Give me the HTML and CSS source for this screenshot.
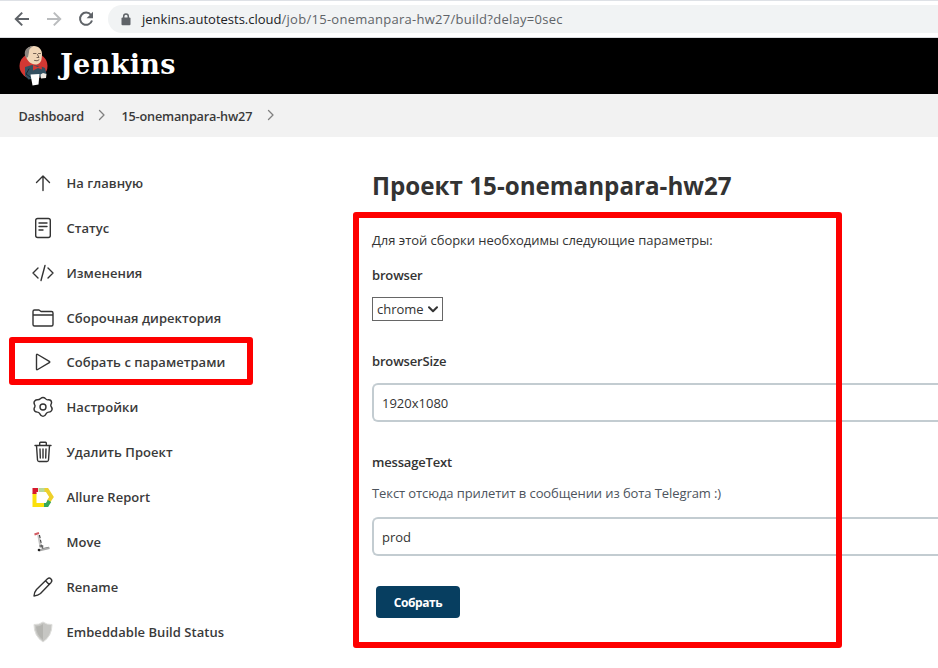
FILE: index.html
```html
<!DOCTYPE html>
<html lang="ru">
<head>
<meta charset="utf-8">
<title>Проект 15-onemanpara-hw27</title>
<link rel="stylesheet" href="styles.css">
</head>
<body>
<div class="toolbar">
  <svg class="nav" viewBox="0 0 20 20"><path d="M17 10H4M10.2 3.6 3.8 10l6.4 6.4"/></svg>
  <svg class="nav nav-off" viewBox="0 0 20 20"><path d="M3 10h13M9.8 3.6l6.4 6.4-6.4 6.4"/></svg>
  <svg class="nav" viewBox="0 0 20 20"><path d="M15 6A6.1 6.1 0 1 0 16 11.5"/><path class="solid" d="M17 2.8v6.4h-6.4z"/></svg>
  <div class="address">
    <svg class="lock" viewBox="0 0 10 13"><rect x="0.500" y="4.500" width="9" height="7.700" rx="1"/><path d="M2.700 5V3.300a2.300 2.300 0 0 1 4.600 0V5"/></svg>
    <span class="host">jenkins.autotests.cloud</span><span class="path">/job/15-onemanpara-hw27/build?delay=0sec</span>
  </div>
</div>
<header class="header">
  <svg class="butler" viewBox="0 0 30 41">
    <ellipse cx="14.500" cy="21" rx="14" ry="13" fill="#d33833"/>
    <path d="M6 22l7-2 8 1 5 2 1.500 6-4 3-14 2.500-3.500-4z" fill="#335061"/>
    <path d="M6.500 10C6 4 10 1 15 1s8.500 4 8 9-.5 7-4 9C14 21 8 17 6.500 10z" fill="#f0d6b7"/>
    <path d="M7 13C3.500 6 8 1 14 1.200 10.500 3 10 5 10 7l-1 5z" fill="#8d8680"/>
    <path d="M14.500 8.500H17m2.500 0h2M18.500 9.500l1.500 3h-2M15.500 15.500q3 1 4.500-.5" fill="none" stroke="#54443b" stroke-width=".8"/>
    <path d="M14 20l4.500 2 4-2 .5 4.500-4-1.500-5 2.500z" fill="#d33833"/>
    <path d="M11.500 29.500l9-.5-1 10.500-6 1z" fill="#fff"/>
    <path d="M21.500 29.500l2.500-1.500 3.500 1-.5 4-5 .5z" fill="#eee9e2"/>
    <path d="M10 24l-3 5 4 3" fill="none" stroke="#16272f"/>
  </svg>
  <span class="wordmark">Jenkins</span>
</header>
<nav class="crumbs">
  <span>Dashboard</span>
  <svg class="chev" viewBox="0 0 8 12"><path d="M1.5 1.500 6 6l-4.500 4.500"/></svg>
  <span>15-onemanpara-hw27</span>
  <svg class="chev" viewBox="0 0 8 12"><path d="M1.5 1.500 6 6l-4.500 4.500"/></svg>
</nav>
<div class="page">
  <aside class="tasks">
    <div class="task"><svg viewBox="0 0 24 24"><path d="M12 19.500V5M5.500 11.500 12 5l6.500 6.500"/></svg><span>На главную</span></div>
    <div class="task"><svg viewBox="0 0 24 24"><rect x="4.700" y="2.500" width="14.600" height="19" rx="2"/><path d="M8 7h8M8 10.500h8M8 14h4"/></svg><span>Статус</span></div>
    <div class="task"><svg viewBox="0 0 24 24"><path d="M7 7l-5 5 5 5M17 7l5 5-5 5M14 4.500l-4 15"/></svg><span>Изменения</span></div>
    <div class="task"><svg viewBox="0 0 24 24"><path d="M2 18.500V5.500Q2 4 3.500 4H8l2 1.500h10.500Q22 5.500 22 7v11.500Q22 20 20.500 20h-17Q2 20 2 18.500zM2 9h20"/></svg><span>Сборочная директория</span></div>
    <div class="task marked"><svg viewBox="0 0 24 24"><path d="M5.500 5v14q0 1.200 1.200.500l11.600-6.800q.900-.700 0-1.400L6.700 4.500Q5.500 3.800 5.500 5z"/></svg><span>Собрать с параметрами</span></div>
    <div class="task"><svg viewBox="0 0 24 24"><circle cx="12" cy="12" r="3"/><path d="M9.600 3.500Q12 1.500 14.400 3.500q1 1.600 2.800 1.300 3-.2 3.400 2.600-.1 1.200-.7 2.200-.5 1.400.5 2.400 1.600 2.200-.2 4.100-.9 1-2.600 1-1.500 0-2.200 1.300-1.500 3-3.400 3-2 0-3.300-2.800-.8-1.500-2.400-1.500-3.200 0-3.300-3 .1-1.100.8-2.100.6-1-.2-2.300-1.300-2.300.3-3.900.9-1 2.400-1 2 .1 3.300-1.300z"/></svg><span>Настройки</span></div>
    <div class="task"><svg viewBox="0 0 24 24"><path d="M4 5.500h16M5.500 5.500l1 14.500q.2 1.500 1.500 1.500h8q1.300 0 1.500-1.500l1-14.500M8.700 5.500V3q0-.8.8-.8h5q.8 0 .8.800v2.500M9 9l.3 9M12 9v9M15 9l-.3 9"/></svg><span>Удалить Проект</span></div>
    <div class="task"><svg viewBox="0 0 24 24" class="art"><path d="M3.500 8v12h10" stroke="#fbe00c"/><path d="M8 5h8l4.500 7-3 4.500" stroke="#eed02a"/><path d="M7.500 5h6" stroke="#b7d99b"/><path d="M13 20h3l2.500-4" stroke="#35a85a"/><path d="M3.500 9V5H7" stroke="#d6192d"/></svg><span>Allure Report</span></div>
    <div class="task"><svg viewBox="0 0 24 24" class="art"><path d="M7.500 5l2.500 13" stroke="#c4c4c4" stroke-width="2.500"/><path d="M8.500 5l2.500 12" stroke="#303030" stroke-width="1" stroke-dasharray="3 2"/><path d="M3.500 4.500L8 3" stroke="#d35b62" stroke-width="2"/><path d="M8.500 16h3v3L18 17.500" stroke="#666" stroke-width="1.500"/><path d="M8 20.500L18.500 18" stroke="#aaa" stroke-width="2"/><circle cx="8" cy="20" r="1.300" fill="#222" stroke="none"/></svg><span>Move</span></div>
    <div class="task"><svg viewBox="0 0 24 24"><path d="M3 21q.3-4 2.500-6.500L16.500 3.800q1.800-1.500 3.500.1 1.600 1.700.1 3.500L9.500 18.500Q7 20.700 3 21zM14.500 5.800l3.700 3.700"/></svg><span>Rename</span></div>
    <div class="task"><svg viewBox="0 0 24 24" class="art"><path d="M12 2q4 3 9 2.500Q21 16 12 22 3 16 3 4.500 8 5 12 2z" fill="#c6c6c3" stroke="#dededb" stroke-width="1"/><path d="M12 4v16Q5.500 15 5 6.500 9 6.500 12 4z" fill="#b4b4b0" stroke="none"/></svg><span>Embeddable Build Status</span></div>
  </aside>
  <main class="main">
    <h1>Проект 15-onemanpara-hw27</h1>
    <div class="form">
      <p class="intro">Для этой сборки необходимы следующие параметры:</p>
      <div class="label l1">browser</div>
      <div class="select"><span>chrome</span><svg viewBox="0 0 10 7"><path d="M1 1.200l4 4 4-4"/></svg></div>
      <div class="label l2">browserSize</div>
      <div class="input">1920x1080</div>
      <div class="label l2">messageText</div>
      <p class="help">Текст отсюда прилетит в сообщении из бота Telegram :)</p>
      <div class="input input-message">prod</div>
      <button class="submit">Собрать</button>
    </div>
  </main>
</div>
</body>
</html>
```
FILE: styles.css
```css
*, *::after { box-sizing: border-box; }
body { margin: 0; width: 938px; height: 668px; overflow: hidden; background: #fff; color: #333; font: 13px/20px "Open Sans", "Noto Sans", sans-serif; white-space: nowrap; }
svg { display: block; flex: none; fill: none; stroke: currentColor; stroke-linecap: round; stroke-linejoin: round; }
.toolbar { display: flex; align-items: center; height: 38px; padding-left: 12px; border-top: 1px solid #dee1e6; border-bottom: 1px solid #dadce0; }
.nav { width: 20px; height: 20px; margin-right: 12px; color: #5f6368; stroke-width: 2; stroke-linecap: butt; stroke-linejoin: miter; }
.nav-off { color: #babcbe; }
.solid { fill: currentColor; stroke: none; }
.address { display: flex; align-items: center; flex: 1; height: 28px; padding-left: 13px; border-radius: 14px 0 0 14px; background: #f1f3f4; }
.lock { width: 10px; height: 13px; margin-right: 11px; color: #5f6368; stroke-width: 1.5; }
.lock rect { fill: currentColor; stroke: none; }
.host { color: #202124; }
.path { color: #5f6368; letter-spacing: .27px; }
.header { display: flex; align-items: center; height: 56px; padding-left: 19px; background: #000; }
.butler { width: 30px; height: 41px; margin-bottom: 2px; stroke: none; }
.wordmark { margin: 0 0 3px 11px; color: #fff; font: bold 27px/32px "DejaVu Serif", serif; letter-spacing: .35px; }
.crumbs { display: flex; align-items: center; height: 43px; padding-left: 18.5px; background: #f2f2f2; font-weight: 600; letter-spacing: -.2px; font-size: 12.7px; }
.crumbs span { color: #3a3a3a; }
.chev { width: 8px; height: 12px; margin: 0 15px 2px 14.500px; stroke: #808080; stroke-width: 1.300; }
.page { display: grid; grid-template-columns: 353px 1fr; }
.tasks { padding-top: 23.4px; }
.task { display: flex; align-items: center; gap: 11.500px; height: 44.9px; padding-left: 31px; font-weight: 600; letter-spacing: .04px; }
.task span { color: #3a3a3a; }
.task svg { width: 24px; height: 24px; stroke-width: 1.400; }
.task .art { stroke-width: 4; stroke-linecap: butt; stroke-linejoin: miter; }
.marked { position: relative; }
.marked::after { content: ""; position: absolute; left: 9px; top: -3.400px; width: 244px; height: 48px; border: 6px solid #fe0000; border-radius: 3px; }
h1 { margin: 34px 0 12px 19px; font-size: 24.2px; line-height: 29px; font-weight: 700; }
.form { position: relative; height: 436px; padding: 18px 0 0 19px; }
.form::after { content: ""; position: absolute; left: 0; top: 0; width: 489px; height: 436px; border: 6px solid #fe0000; border-radius: 3px; }
p { margin: 0; }
.intro { letter-spacing: -.04px; }
.label { font-weight: 600; letter-spacing: -.17px; }
.l1 { margin-top: 15px; }
.select { display: flex; align-items: center; gap: 4px; width: 71px; height: 24px; margin-top: 12px; padding-left: 4px; border: 1px solid #666; }
.select svg { width: 10px; height: 7px; stroke-width: 2; }
.l2 { margin-top: 30px; }
.input { display: flex; align-items: center; height: 39px; margin-top: 12px; padding-left: 8px; border: 2px solid #c3ccd1; border-right: 0; border-radius: 6px 0 0 6px; }
.help { margin-top: 11px; color: #4d545d; letter-spacing: -.09px; }
.input-message { margin-top: 14px; }
.submit { display: block; width: 84px; height: 32px; margin: 30px 0 0 4px; padding: 2px 0 0; border: 0; border-radius: 4px; background: #073e60; color: #fff; font: 700 12px/20px "Open Sans", sans-serif; letter-spacing: -.4px; }
```
